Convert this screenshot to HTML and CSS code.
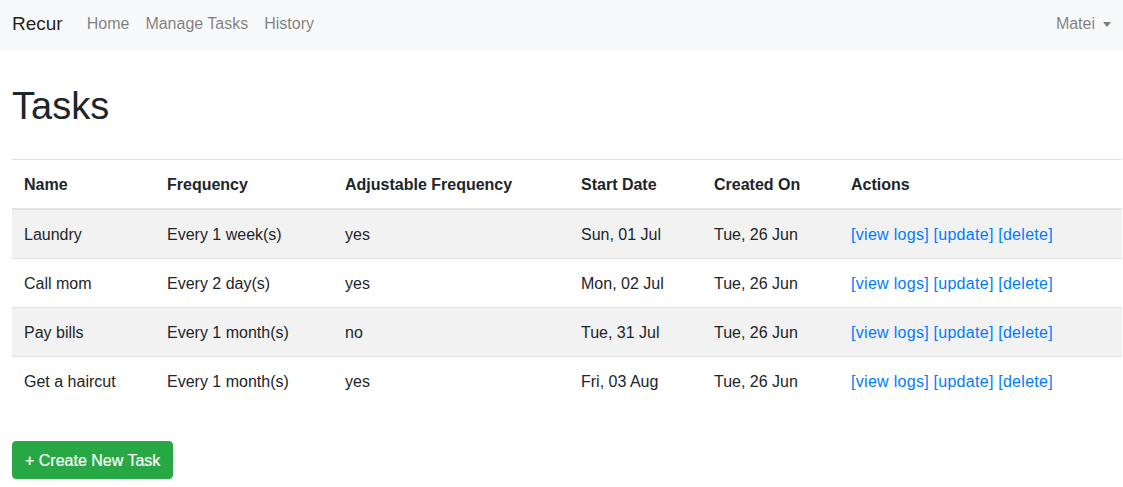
FILE: index.html
```html
<!DOCTYPE html>
<html>
<head>
<meta charset="utf-8">
<link rel="stylesheet" href="styles.css">
</head>
<body>
<nav class="navbar">
  <a class="brand" href="#">Recur</a>
  <ul class="nav">
    <li><a href="#">Home</a></li>
    <li><a href="#">Manage Tasks</a></li>
    <li><a href="#">History</a></li>
  </ul>
  <div class="user">Matei <span class="caret"></span></div>
</nav>
<main class="main">
  <h1 class="title">Tasks</h1>
  <table class="tasks">
    <colgroup>
      <col class="c1"><col class="c2"><col class="c3"><col class="c4"><col class="c5"><col class="c6">
    </colgroup>
    <thead>
      <tr><th>Name</th><th>Frequency</th><th>Adjustable Frequency</th><th>Start Date</th><th>Created On</th><th>Actions</th></tr>
    </thead>
    <tbody>
      <tr><td>Laundry</td><td>Every 1 week(s)</td><td>yes</td><td>Sun, 01 Jul</td><td>Tue, 26 Jun</td><td><a href="#">[view logs]</a> <a href="#">[update]</a> <a href="#">[delete]</a></td></tr>
      <tr><td>Call mom</td><td>Every 2 day(s)</td><td>yes</td><td>Mon, 02 Jul</td><td>Tue, 26 Jun</td><td><a href="#">[view logs]</a> <a href="#">[update]</a> <a href="#">[delete]</a></td></tr>
      <tr><td>Pay bills</td><td>Every 1 month(s)</td><td>no</td><td>Tue, 31 Jul</td><td>Tue, 26 Jun</td><td><a href="#">[view logs]</a> <a href="#">[update]</a> <a href="#">[delete]</a></td></tr>
      <tr><td>Get a haircut</td><td>Every 1 month(s)</td><td>yes</td><td>Fri, 03 Aug</td><td>Tue, 26 Jun</td><td><a href="#">[view logs]</a> <a href="#">[update]</a> <a href="#">[delete]</a></td></tr>
    </tbody>
  </table>
  <a class="btn-create" href="#">+ Create New Task</a>
</main>
</body>
</html>
```
FILE: styles.css
```css
* { box-sizing: border-box; }
html, body { margin: 0; padding: 0; }
body {
  font-family: "Liberation Sans", Arial, sans-serif;
  font-size: 16px;
  line-height: 24px;
  color: #212529;
  background: #fff;
}
a { text-decoration: none; }

.navbar {
  display: flex;
  align-items: center;
  height: 50px;
  padding: 0 12px 2px;
  background: #f8f9fa;
}
.brand {
  font-size: 19px;
  color: rgba(0,0,0,.9);
  margin-right: 16px;
}
.nav {
  display: flex;
  list-style: none;
  margin: 0;
  padding: 0;
}
.nav li a {
  display: block;
  padding: 0 8px;
  color: rgba(0,0,0,.5);
}
.user {
  margin-left: auto;
  color: rgba(0,0,0,.5);
  display: flex;
  align-items: center;
}
.caret {
  display: inline-block;
  width: 0; height: 0;
  margin-left: 8px;
  border-top: 5px solid rgba(0,0,0,.5);
  border-left: 4.5px solid transparent;
  border-right: 4.5px solid transparent;
}

.main { padding: 0 1px 0 12px; }
.title {
  font-size: 38px;
  font-weight: 500;
  line-height: 46px;
  margin: 33px 0 30px;
}
.tasks {
  width: 100%;
  border-collapse: collapse;
  table-layout: fixed;
}
.c1 { width: 143px; }
.c2 { width: 178px; }
.c3 { width: 236px; }
.c4 { width: 133px; }
.c5 { width: 137px; }
.c6 { width: auto; }
.tasks th, .tasks td {
  padding: 13px 12px 11px;
  text-align: left;
  vertical-align: top;
  border-top: 1px solid #dee2e6;
  white-space: nowrap;
}
.tasks th { font-weight: 700; }
.tasks thead th { border-bottom: 2px solid #dee2e6; }
.tasks tbody tr:nth-child(odd) { background: rgba(0,0,0,.05); }
.tasks a { color: #007bff; letter-spacing: 0.3px; }

.btn-create {
  display: inline-block;
  margin-top: 36px;
  padding: 7px 12px 5px;
  border: 1px solid #28a745;
  border-radius: 4px;
  background: #28a745;
  color: #fff;
  font-size: 16px;
  line-height: 24px;
  -webkit-text-stroke: 0.2px #fff;
}
```
